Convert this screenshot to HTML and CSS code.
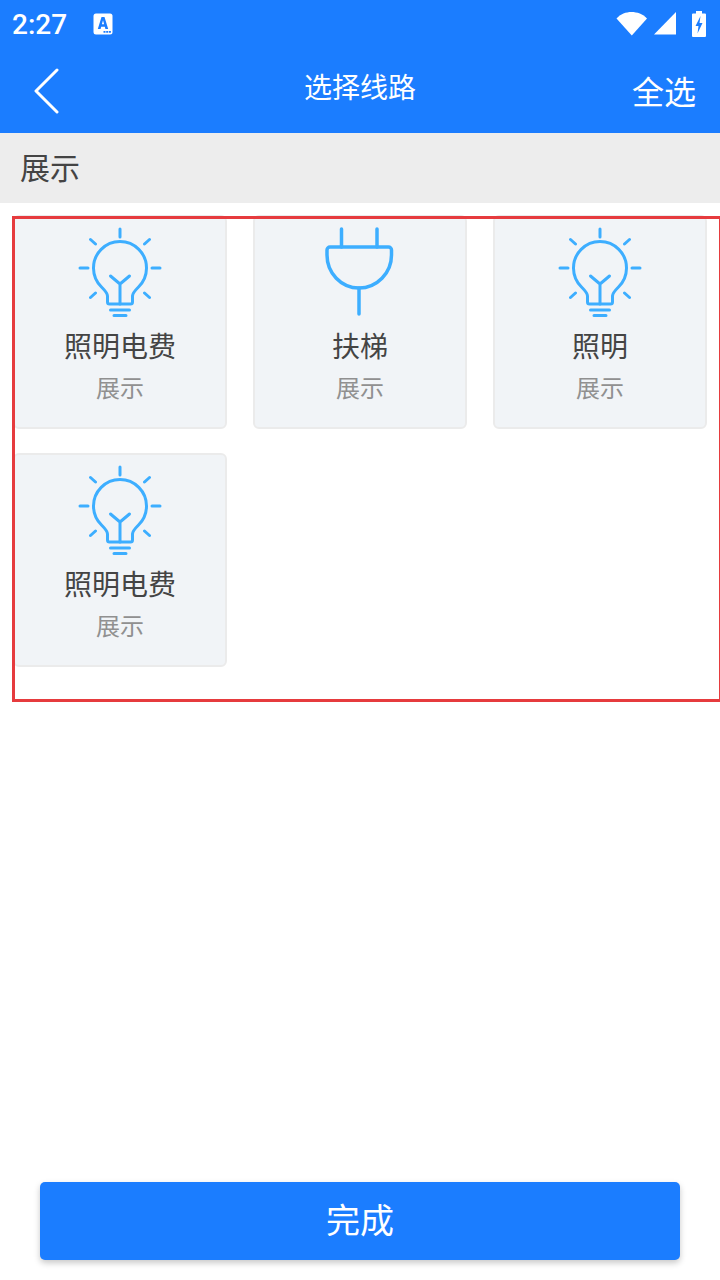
FILE: index.html
```html
<!DOCTYPE html>
<html lang="zh">
<head>
<meta charset="utf-8">
<title>选择线路</title>
<link rel="stylesheet" href="styles.css">
</head>
<body>
<div class="page">
  <header class="header">
    <div class="status">
      <span class="time">2:27</span>
      <svg class="notif" width="20" height="22" viewBox="0 0 20 22"><rect x="0.5" y="0.5" width="19" height="21" rx="2.5" fill="#fff"/><path d="M4.800 16 8.500 4h3l3.700 12h-2.800l-.6-2.200H8.200L7.600 16zM8.900 11.200h2.200L10 7.300z" fill="#1b7dff" fill-rule="evenodd"/><path d="M10.500 18h2v1.800h-2zM13.200 18h2v1.800h-2zM15.900 18h2v1.800h-2z" fill="#1b7dff"/></svg>
      <span class="status-right">
        <svg width="32" height="25" viewBox="0 0 32 25"><path d="M0.500 7.500C4.500 3 10 1 15.500 1S27 3 31 7.500L15.800 24.500z" fill="#fff"/></svg>
        <svg width="22" height="23" viewBox="0 0 22 23"><path d="M22 0v22.500H0z" fill="#fff"/></svg>
        <svg width="14" height="26" viewBox="0 0 14 26"><path d="M4 0h6v2.500h3a1 1 0 0 1 1 1V25a1 1 0 0 1-1 1H1a1 1 0 0 1-1-1V3.500a1 1 0 0 1 1-1h3z" fill="#fff"/><path d="M8.500 5 3.500 15h3l-1 7.500 5-10.500h-3z" fill="#1b7dff"/></svg>
      </span>
    </div>
    <div class="toolbar">
      <svg class="back" width="28" height="46" viewBox="0 0 28 46"><path d="M25 2 4 23l21 21" fill="none" stroke="#fff" stroke-width="3" stroke-linecap="round" stroke-linejoin="round"/></svg>
      <h1 class="title">选择线路</h1>
      <span class="select-all">全选</span>
    </div>
  </header>
  <div class="section">展示</div>
  <main class="grid">
    <div class="card">
      <svg class="icon" width="84" height="92" viewBox="0 0 84 92"><use href="#bulb"/></svg>
      <div class="name">照明电费</div>
      <div class="sub">展示</div>
    </div>
    <div class="card">
      <svg class="icon" width="84" height="92" viewBox="0 0 84 92"><use href="#plug"/></svg>
      <div class="name">扶梯</div>
      <div class="sub">展示</div>
    </div>
    <div class="card">
      <svg class="icon" width="84" height="92" viewBox="0 0 84 92"><use href="#bulb"/></svg>
      <div class="name">照明</div>
      <div class="sub">展示</div>
    </div>
    <div class="card">
      <svg class="icon" width="84" height="92" viewBox="0 0 84 92"><use href="#bulb"/></svg>
      <div class="name">照明电费</div>
      <div class="sub">展示</div>
    </div>
  </main>
  <div class="frame"></div>
  <div class="footer"><button class="done">完成</button></div>
</div>
<svg class="defs" width="0" height="0">
  <defs>
    <g id="bulb" fill="none" stroke="#3daeff" stroke-width="3" stroke-linecap="round" stroke-linejoin="round">
      <path d="M42 3v8M2 42h8M74 42h8M12.500 13.500l5 4.500M71.500 13.500l-5 4.500M12.500 71.500l5-4.500M71.500 71.500l-5-4.500"/>
      <path d="M29.500 76v-6c0-3-3-6-6-9A26.500 26.500 0 1 1 60.500 61c-3 3-6 6-6 9v6a2 2 0 0 1-2 2h-21a2 2 0 0 1-2-2z"/>
      <path d="M32.500 50l9.500 8 9.500-8M42 58v20M32.500 84h19M36 89.500h12"/>
    </g>
    <g id="plug" fill="none" stroke="#3daeff" stroke-width="3.500" stroke-linecap="round" stroke-linejoin="round">
      <path d="M23.500 3v18M59 3v18M41 62v26"/>
      <path d="M12 21h58.500a3 3 0 0 1 3 3v5c0 18-14.500 33-32.500 33S9 47 9 29v-5a3 3 0 0 1 3-3z"/>
    </g>
  </defs>
</svg>
</body>
</html>
```

FILE: styles.css
```css
* { box-sizing: border-box; }
html, body { margin: 0; padding: 0; }
body { background: #fff; font-family: "Noto Sans CJK SC", Roboto, sans-serif; }
.page { position: relative; width: 720px; height: 1280px; display: flex; flex-direction: column; overflow: hidden; }
.header { background: #1b7dff; color: #fff; height: 133px; flex: none; }
.status { height: 49px; padding: 1px 14px 0 12px; display: flex; align-items: center; }
.time { font-family: Roboto, sans-serif; font-weight: 500; font-size: 28px; line-height: 48px; width: 81px; }
.notif { flex: none; margin-top: -2px; }
.status-right { margin-left: auto; margin-top: -3px; display: flex; align-items: center; gap: 6px; }
.status-right svg:last-child { margin-left: 10px; }
.toolbar { height: 84px; position: relative; display: flex; align-items: center; justify-content: center; }
.back { position: absolute; left: 32px; top: 19px; }
.title { margin: 0; font-size: 28px; font-weight: 400; line-height: 40px; margin-top: -10px; }
.select-all { position: absolute; right: 24px; top: 18px; font-size: 32px; line-height: 46px; }
.section { height: 70px; flex: none; background: #ededed; color: #444; font-size: 30px; line-height: 66px; padding-left: 20px; }
.grid { display: grid; grid-template-columns: repeat(3, 214px); column-gap: 26px; row-gap: 24px; padding: 12px 0 0 13px; }
.card { height: 214px; background: #f1f4f7; border: 2px solid #ebebeb; border-radius: 6px; display: flex; flex-direction: column; align-items: center; padding-top: 9px; }
.icon { display: block; flex: none; }
.name { margin-top: 6px; font-size: 28px; line-height: 42px; color: #444; }
.sub { margin-top: 1px; font-size: 24px; line-height: 40px; color: #909090; }
.frame { position: absolute; left: 12px; top: 216px; width: 710px; height: 486px; border: 3px solid #e63b3e; pointer-events: none; }
.footer { margin-top: auto; padding: 0 40px 20px; }
.done { display: block; width: 100%; height: 78px; border: 0; border-radius: 5px; background: #1b7dff; color: #fff; font-family: inherit; font-size: 34px; line-height: 1; padding: 0 0 4px; box-shadow: 0 3px 6px rgba(0,0,0,.22); }
.defs { position: absolute; }
```
